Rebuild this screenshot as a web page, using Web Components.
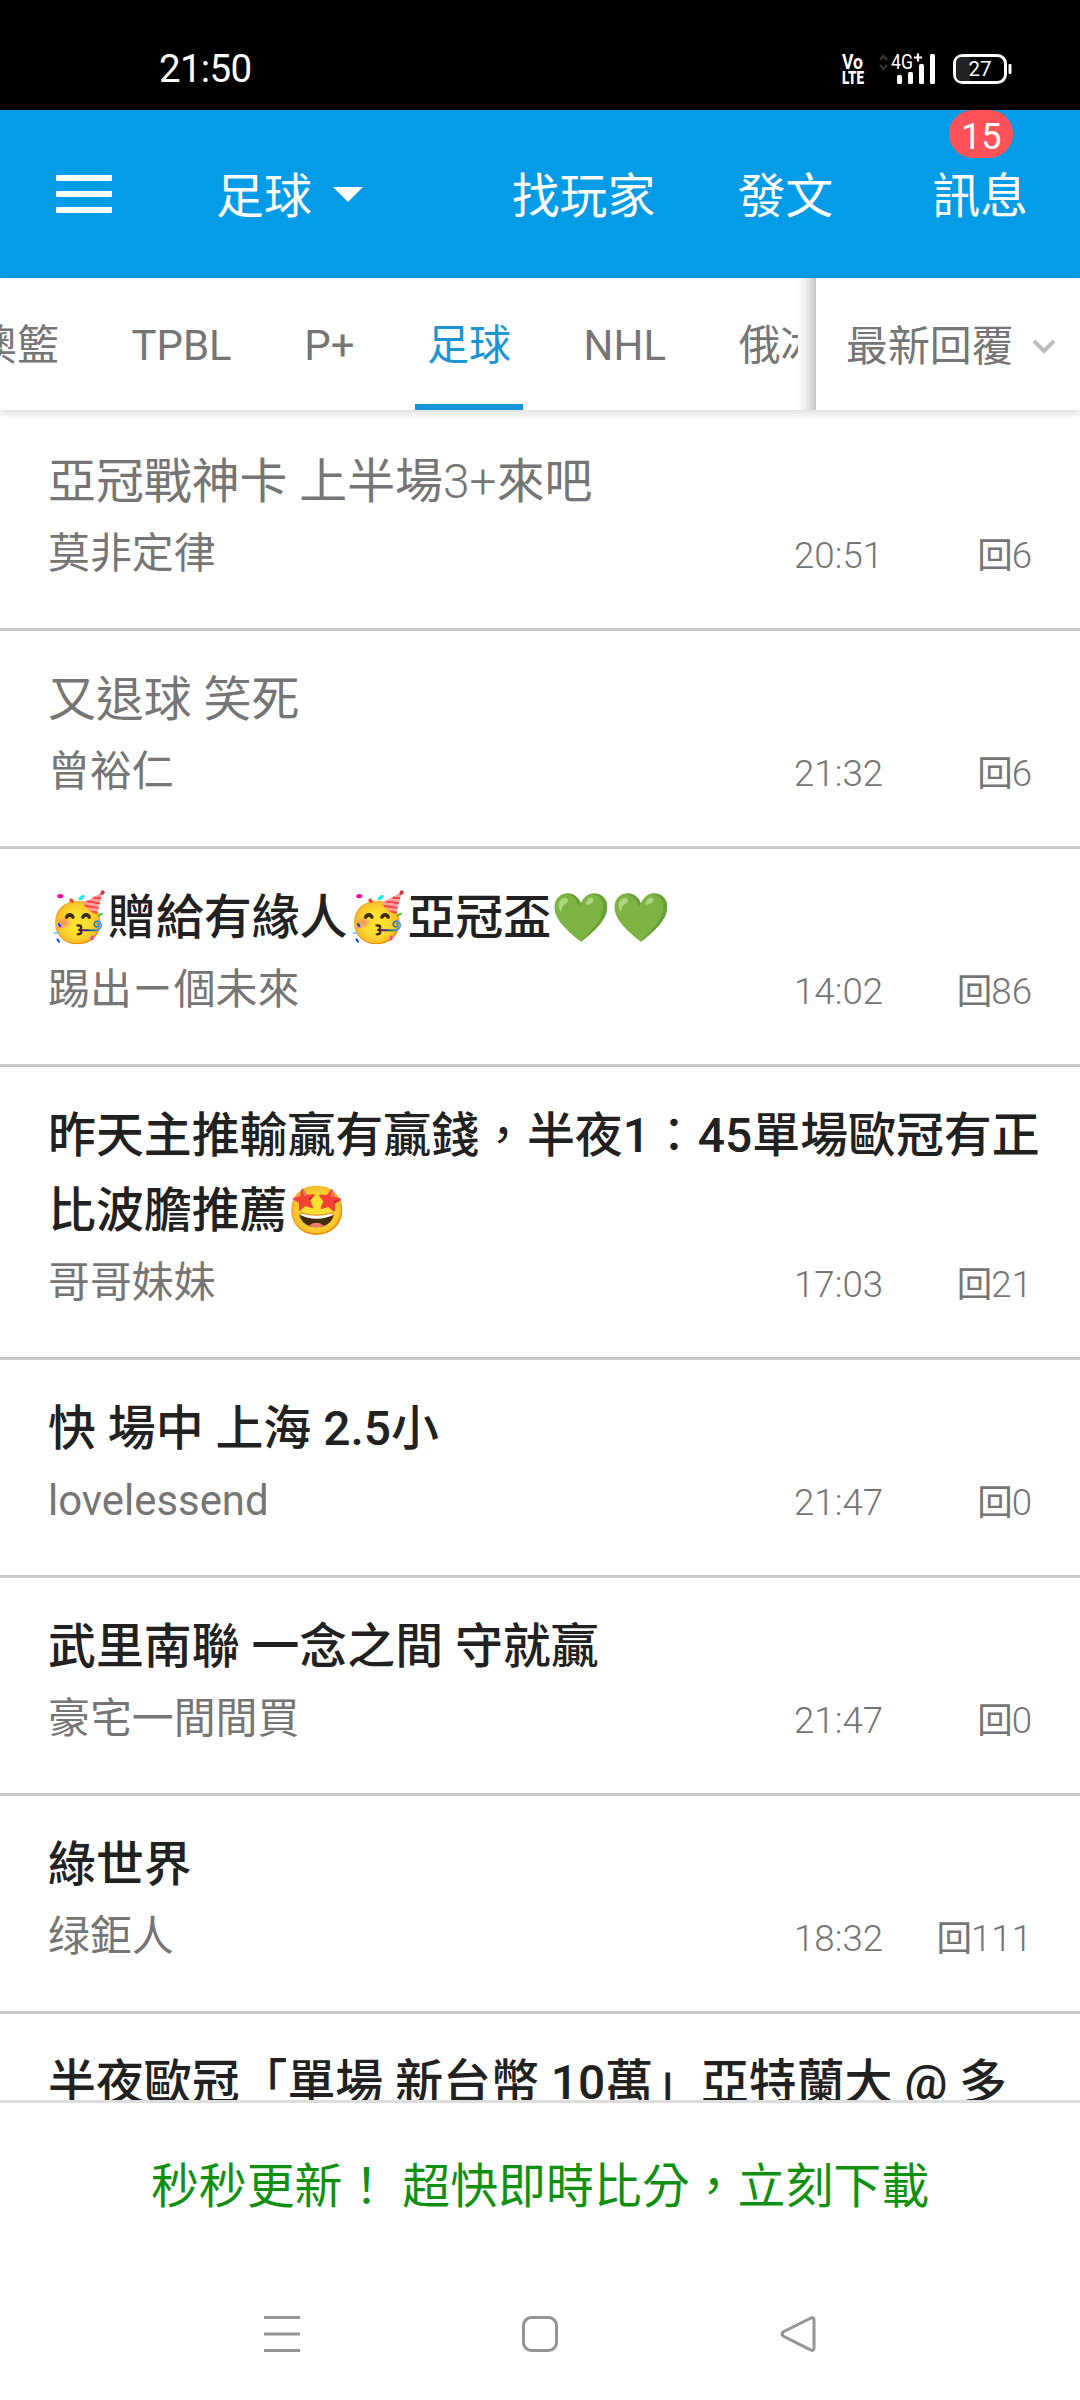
<!DOCTYPE html>
<html lang="zh-Hant">
<head>
<meta charset="utf-8">
<title>足球</title>
<style>
html,body{margin:0;padding:0;background:#fff}
body{width:1080px;height:2400px;overflow:hidden;font-family:Roboto,"Noto Sans CJK TC",sans-serif;font-size:41.900px;color:#757575}
</style>
</head>
<body>
<forum-app></forum-app>
<script>
const define = (name, html, init) => {
  const tpl = document.createElement('template');
  tpl.innerHTML = html;
  customElements.define(name, class extends HTMLElement {
    constructor() {
      super();
      this.attachShadow({ mode: 'open' }).append(tpl.content.cloneNode(true));
    }
    connectedCallback() { if (init) init(this, this.shadowRoot); }
  });
};

define('status-bar', `
<style>
:host{display:flex;justify-content:space-between;align-items:center;height:110px;background:#000;color:#fff;padding:28px 64px 0 159px;box-sizing:border-box}
.time{font-size:38.5px;line-height:50px;letter-spacing:-.7px}
svg{display:block}
</style>
<span class="time">21:50</span>
<svg width="178" height="40" viewBox="0 0 178 40" fill="#fff" font-family="Roboto,sans-serif">
  <text x="4" y="20" font-size="20" font-weight="700" textLength="21" lengthAdjust="spacingAndGlyphs">Vo</text>
  <text x="4" y="35" font-size="19" font-weight="900" textLength="22" lengthAdjust="spacingAndGlyphs">LTE</text>
  <path d="M42 11l3.500-4 3.500 4M42 16l3.500 4 3.500-4" fill="none" stroke="#333" stroke-width="2.5"/>
  <text x="53" y="20" font-size="20.500" textLength="22" lengthAdjust="spacingAndGlyphs">4G</text>
  <path d="M76 8.500h8M80 4.500v8" stroke="#fff" stroke-width="2.200"/>
  <rect x="59" y="26" width="5" height="9" rx="1.500"/><rect x="70" y="23" width="5" height="12" rx="1.500"/>
  <rect x="81" y="15" width="5" height="20" rx="1.500"/><rect x="92" y="5" width="5" height="30" rx="1.500"/>
  <rect x="116.500" y="6.500" width="51" height="27" rx="8" fill="none" stroke="#fff" stroke-width="3"/>
  <path d="M118 14q0-6 6-6h8v24h-8q-6 0-6-6z" fill="#222"/>
  <rect x="170.500" y="15" width="3" height="10" rx="1"/>
  <text x="130.500" y="27" font-size="21" textLength="23" lengthAdjust="spacingAndGlyphs">27</text>
</svg>`);

define('count-badge', `
<style>
:host{display:flex;align-items:center;justify-content:center;width:64px;height:48px;border-radius:24px;background:#ff5258;color:#fff;font-size:36px;line-height:48px;padding-top:5px;box-sizing:border-box}
</style><slot></slot>`);

define('app-bar', `
<style>
:host{display:flex;align-items:center;height:168px;background:#049be7;color:#fff;font-size:47.900px;line-height:60px;padding:0 52px 0 56px;box-sizing:border-box}
svg{display:block;flex:none}
span{display:block;padding-top:6px}
.board{display:flex;align-items:center;gap:21px;margin-left:104px;flex:1}
.actions{display:flex;gap:82px}
.actions span{position:relative}
.actions span:nth-child(3){margin-left:17px}
count-badge{position:absolute;left:17px;top:-51px}
</style>
<svg width="56" height="38" viewBox="0 0 56 38" fill="#fff"><path d="M0 0h56v6H0zM0 16h56v6H0zM0 32h56v6H0z"/></svg>
<div class="board"><span>足球</span><svg width="30" height="16" viewBox="0 0 30 16"><path d="M0 1h30L15 16z" fill="#fff"/></svg></div>
<div class="actions"><span>找玩家</span><span>發文</span><span>訊息<count-badge>15</count-badge></span></div>`);

define('tab-item', `
<style>
:host{display:flex;flex-direction:column;justify-content:center;flex:none;height:132px;padding:9px 12px 0;box-sizing:border-box;border-bottom:6px solid transparent;white-space:nowrap}
:host([active]){color:#1a94d2;border-color:#1a94d8}
</style><slot></slot>`);

define('tab-strip', `
<style>
:host{display:flex;height:132px;background:#fff;line-height:60px;position:relative;z-index:1;box-shadow:0 3px 9px rgba(0,0,0,.16)}
.scroll{display:flex;gap:48.700px;width:798px;overflow:hidden;justify-content:flex-start}
.scroll tab-item:first-child{margin-left:-37px}
.edge{width:18px;background:linear-gradient(90deg,#fff,#f0f0f0 40%,#c4c4c4)}
.sort{display:flex;align-items:center;gap:18px;padding-left:30px}
.sort span{padding-top:6px}
svg{display:block;margin-top:5px}
</style>
<div class="scroll"><tab-item>澳籃</tab-item><tab-item>TPBL</tab-item><tab-item>P+</tab-item><tab-item active>足球</tab-item><tab-item>NHL</tab-item><tab-item>俄冰</tab-item></div>
<div class="edge"></div>
<div class="sort"><span>最新回覆</span><svg width="24" height="16" viewBox="0 0 24 16"><path d="M2 2l10 10L22 2" fill="none" stroke="#bcbcbc" stroke-width="4"/></svg></div>`);

define('topic-row', `
<style>
:host{display:block;padding:32px 36px 41px 48px;border-bottom:3px solid #cacaca;box-sizing:border-box;min-height:218px}
.title{font-size:47.900px;line-height:75px;font-weight:500;color:#212121;white-space:nowrap}
:host([read]) .title{font-weight:400;color:#757575}
.meta{display:flex;align-items:baseline;height:67px;line-height:68px}
.author{flex:1}
.time,.replies{font-size:36.700px;font-weight:300}
.time{width:89px}
.replies{width:149px;text-align:right;margin-right:12px}
b{font-weight:400;font-size:35.500px;margin-right:-1px}
</style>
<div class="title"><slot></slot></div>
<div class="meta"><span class="author"></span><span class="time"></span><span class="replies"><b>回</b><span class="count"></span></span></div>`,
(el, root) => {
  root.querySelector('.author').textContent = el.getAttribute('author');
  root.querySelector('.time').textContent = el.getAttribute('time');
  root.querySelector('.count').textContent = el.getAttribute('replies');
});

define('topic-list', `
<style>:host{display:block;height:1690px;padding-top:3px;box-sizing:border-box;overflow:hidden;background:#fff}</style><slot></slot>`);

define('promo-banner', `
<style>
:host{display:flex;align-items:center;justify-content:center;height:165px;border-top:3px solid #ddd;box-sizing:border-box;background:#fff;color:#109010;font-size:47.900px;line-height:70px;white-space:pre;padding-top:6px}
</style><slot></slot>`);

define('system-nav', `
<style>
:host{display:flex;justify-content:space-between;align-items:center;height:135px;padding:2px 264px 0;box-sizing:border-box;background:#fff}
svg{display:block;fill:none;stroke:#949494;stroke-width:3}
</style>
<svg width="36" height="38" viewBox="0 0 36 38"><path d="M0 2.500h36M0 19h36M0 35.500h36"/></svg>
<svg width="38" height="38" viewBox="0 0 38 38"><rect x="2.500" y="2.500" width="33" height="33" rx="8"/></svg>
<svg width="36" height="38" viewBox="0 0 36 38"><path d="M31 3L3 17Q1 19 3 21L31 35Q34 36 34 33V5Q34 2 31 3Z"/></svg>`);

define('forum-app', `
<style>
:host{display:flex;flex-direction:column;width:1080px;height:2400px}
.e{display:inline-block;width:60px;font-weight:400;font-family:"Noto Color Emoji",sans-serif;line-height:60px}
.r{font-weight:400}
.l{font-weight:300}
</style>
<status-bar></status-bar>
<app-bar></app-bar>
<tab-strip></tab-strip>
<topic-list>
<topic-row read author="莫非定律" time="20:51" replies="6">亞冠戰神卡 上半場<span class="l">3+</span>來吧</topic-row>
<topic-row read author="曾裕仁" time="21:32" replies="6">又退球 笑死</topic-row>
<topic-row author="踢出ㄧ個未來" time="14:02" replies="86"><span class="e">🥳</span>贈給有緣人<span class="e">🥳</span>亞冠盃<span class="e">💚</span><span class="e">💚</span></topic-row>
<topic-row author="哥哥妹妹" time="17:03" replies="21">昨天主推輸贏有贏錢<span class="r">，</span>半夜1<span class="r">：</span>45單場歐冠有正<br>比波膽推薦<span class="e">🤩</span></topic-row>
<topic-row author="lovelessend" time="21:47" replies="0">快 場中 上海 2.5小</topic-row>
<topic-row author="豪宅一間間買" time="21:47" replies="0">武里南聯 一念之間 守就贏</topic-row>
<topic-row author="绿鉅人" time="18:32" replies="111">綠世界</topic-row>
<topic-row author="" time="" replies="">半夜歐冠「單場 新台幣 10萬」亞特蘭大 @ 多</topic-row>
</topic-list>
<promo-banner>秒秒更新！ 超快即時比分，立刻下載</promo-banner>
<system-nav></system-nav>`);
</script>
</body>
</html>
